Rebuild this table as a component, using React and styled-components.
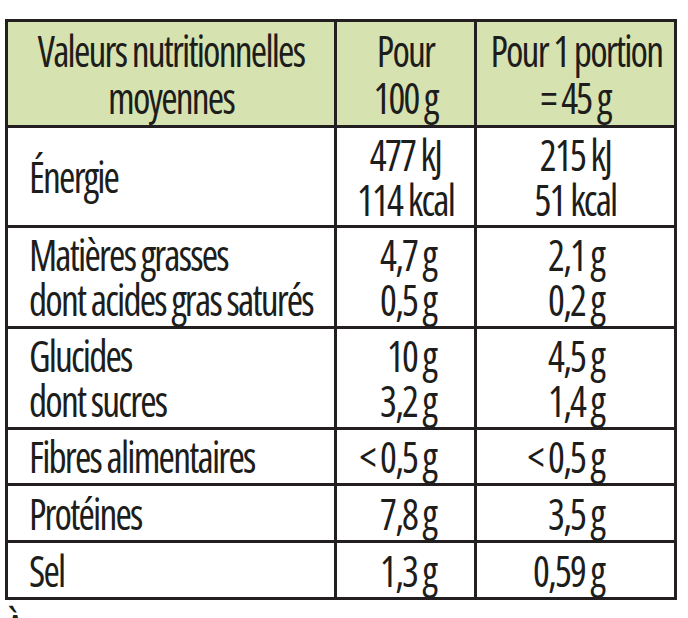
import React from "react";
import styled, { createGlobalStyle } from "styled-components";

const GlobalStyle = createGlobalStyle`
  html, body { margin: 0; padding: 0; background: #ffffff; }
  body { font-family: 'Open Sans', 'Liberation Sans', sans-serif; }
`;

const Page = styled.div`
  padding: 19px 0 0 5px;
`;

const Table = styled.table`
  border-collapse: collapse;
  table-layout: fixed;
  width: 672px;
  font-family: 'Open Sans', 'Liberation Sans', sans-serif;
  font-stretch: 75%;
  font-weight: 500;
  font-size: 44px;
  letter-spacing: -2px;
  color: #1d1d1b;
`;

const Col = styled.col`
  width: ${(p) => p.$w}px;
`;

const Row = styled.tr`
  height: ${(p) => p.$h}px;
`;

const HeadCell = styled.th`
  border: 3px solid #231f20;
  background: #d7e2b1;
  font-weight: 500;
  text-align: center;
  vertical-align: middle;
  padding: 0 4px;
`;

const LabelCell = styled.td`
  border: 3px solid #231f20;
  text-align: left;
  vertical-align: middle;
  padding: 0 0 0 21px;
`;

const ValueCell = styled.td`
  border: 3px solid #231f20;
  text-align: ${(p) => (p.$center ? "center" : "right")};
  vertical-align: middle;
  padding: 0 ${(p) => (p.$center ? 0 : p.$pr)}px 0 0;
`;

/* condensed display face: narrow the glyphs toward the line's alignment edge */
const Line = styled.span`
  display: block;
  line-height: ${(p) => p.$lh || 45}px;
  white-space: nowrap;
  transform: scaleX(0.9);
  transform-origin: ${(p) => p.$origin || "left"} center;
`;

const Unit = styled.span`
  margin-left: 6px;
`;

const Footer = styled.div`
  height: 30px;
  padding: 0 0 0 1px;
  font-family: 'Open Sans', 'Liberation Sans', sans-serif;
  font-stretch: 75%;
  font-size: 42px;
  line-height: 58px;
  color: #1d1d1b;
  overflow: hidden;
`;

const rows = [
  { h: 100, label: ["Énergie"], a: ["477 kJ", "114 kcal"], b: ["215 kJ", "51 kcal"], center: true },
  { h: 101, label: ["Matières grasses", "dont acides gras saturés"], a: ["4,7 g", "0,5 g"], b: ["2,1 g", "0,2 g"] },
  { h: 101, label: ["Glucides", "dont sucres"], a: ["10 g", "3,2 g"], b: ["4,5 g", "1,4 g"] },
  { h: 56, label: ["Fibres alimentaires"], a: ["< 0,5 g"], b: ["< 0,5 g"] },
  { h: 57, label: ["Protéines"], a: ["7,8 g"], b: ["3,5 g"] },
  { h: 57, label: ["Sel"], a: ["1,3 g"], b: ["0,59 g"] },
];

const value = (origin) => (t) => {
  if (t.endsWith(" g")) {
    return (
      <Line key={t} $origin={origin}>
        {t.slice(0, -2)}
        <Unit>g</Unit>
      </Line>
    );
  }
  return (
    <Line key={t} $origin={origin}>
      {t}
    </Line>
  );
};

export default function App() {
  return (
    <Page>
      <GlobalStyle />
      <Table>
        <colgroup>
          <Col $w={329} />
          <Col $w={140} />
          <Col $w={200} />
        </colgroup>
        <thead>
          <Row $h={106}>
            <HeadCell>
              <Line $lh={47} $origin="center">Valeurs nutritionnelles</Line>
              <Line $lh={47} $origin="center">moyennes</Line>
            </HeadCell>
            <HeadCell>
              <Line $lh={47} $origin="center">Pour</Line>
              <Line $lh={47} $origin="center">100 g</Line>
            </HeadCell>
            <HeadCell>
              <Line $lh={47} $origin="center">Pour 1 portion</Line>
              <Line $lh={47} $origin="center">= 45 g</Line>
            </HeadCell>
          </Row>
        </thead>
        <tbody>
          {rows.map((r) => {
            const origin = r.center ? "center" : "right";
            return (
              <Row key={r.label[0]} $h={r.h}>
                <LabelCell>
                  {r.label.map((t) => (
                    <Line key={t}>{t}</Line>
                  ))}
                </LabelCell>
                <ValueCell $center={r.center} $pr={38}>{r.a.map(value(origin))}</ValueCell>
                <ValueCell $center={r.center} $pr={70}>{r.b.map(value(origin))}</ValueCell>
              </Row>
            );
          })}
        </tbody>
      </Table>
      <Footer>À</Footer>
    </Page>
  );
}
